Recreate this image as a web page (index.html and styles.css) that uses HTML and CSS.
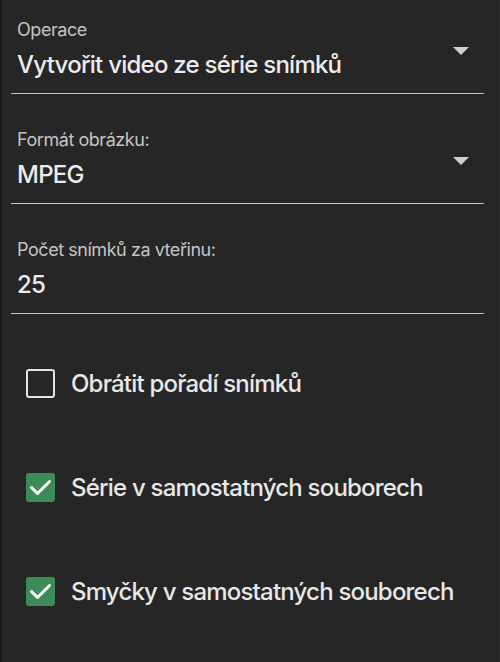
FILE: index.html
```html
<!DOCTYPE html>
<html lang="cs">
<head>
<meta charset="utf-8">
<link rel="stylesheet" href="styles.css">
</head>
<body>
<div class="panel">
  <div class="field">
    <div class="field-main">
      <div class="label">Operace</div>
      <div class="value">Vytvořit video ze série snímků</div>
    </div>
    <span class="arrow"></span>
  </div>
  <div class="field">
    <div class="field-main">
      <div class="label">Formát obrázku:</div>
      <div class="value">MPEG</div>
    </div>
    <span class="arrow"></span>
  </div>
  <div class="field">
    <div class="field-main">
      <div class="label">Počet snímků za vteřinu:</div>
      <div class="value">25</div>
    </div>
  </div>
  <div class="checks">
    <label class="check">
      <span class="box"></span>
      <span class="check-text">Obrátit pořadí snímků</span>
    </label>
    <label class="check">
      <span class="box on"><svg viewBox="0 0 29 29" width="29" height="29"><path d="M5.5 14.5L11.5 20.5L23.5 8.5" fill="none" stroke="#fff" stroke-width="3" stroke-linecap="round" stroke-linejoin="round"/></svg></span>
      <span class="check-text">Série v samostatných souborech</span>
    </label>
    <label class="check">
      <span class="box on"><svg viewBox="0 0 29 29" width="29" height="29"><path d="M5.5 14.5L11.5 20.5L23.5 8.5" fill="none" stroke="#fff" stroke-width="3" stroke-linecap="round" stroke-linejoin="round"/></svg></span>
      <span class="check-text">Smyčky v samostatných souborech</span>
    </label>
  </div>
</div>
</body>
</html>
```
FILE: styles.css
```css
html, body {
  margin: 0;
  height: 100%;
  background: #262626;
}
body {
  font-family: Inter, "Noto Sans", sans-serif;
  color: #e8e8e8;
}
.panel {
  box-sizing: border-box;
  height: 662px;
  border-left: 2px solid #1a1a1a;
  border-right: 1px solid #2e2e2e;
  padding: 20px 15px 0 9px;
  display: flex;
  flex-direction: column;
  gap: 36px;
}
.field {
  display: flex;
  align-items: flex-start;
  border-bottom: 1px solid #c2c2c2;
  padding: 0 15px 14px 6px;
}
.field-main {
  flex: 1;
  display: flex;
  flex-direction: column;
  gap: 11px;
}
.label {
  font-size: 18px;
  line-height: 20px;
  letter-spacing: -0.45px;
  color: #c4c4c4;
}
.value {
  font-size: 24px;
  line-height: 28px;
  font-weight: 500;
  letter-spacing: -0.75px;
  color: #ececec;
}
.arrow {
  margin-top: 27px;
  width: 0;
  height: 0;
  border-left: 8px solid transparent;
  border-right: 8px solid transparent;
  border-top: 8px solid #cfcfcf;
}
.checks {
  display: flex;
  flex-direction: column;
  gap: 75px;
  padding: 19px 0 0 15px;
}
.check {
  display: flex;
  align-items: center;
  gap: 16px;
  height: 29px;
}
.box {
  box-sizing: border-box;
  flex: none;
  width: 29px;
  height: 29px;
  border: 2.5px solid #e2e2e2;
  border-radius: 3px;
  display: flex;
  align-items: center;
  justify-content: center;
}
.box.on {
  border: none;
  background: #3c8b59;
}
.check-text {
  font-size: 24px;
  line-height: 28px;
  font-weight: 500;
  letter-spacing: -0.8px;
  color: #e8e8e8;
}
```
